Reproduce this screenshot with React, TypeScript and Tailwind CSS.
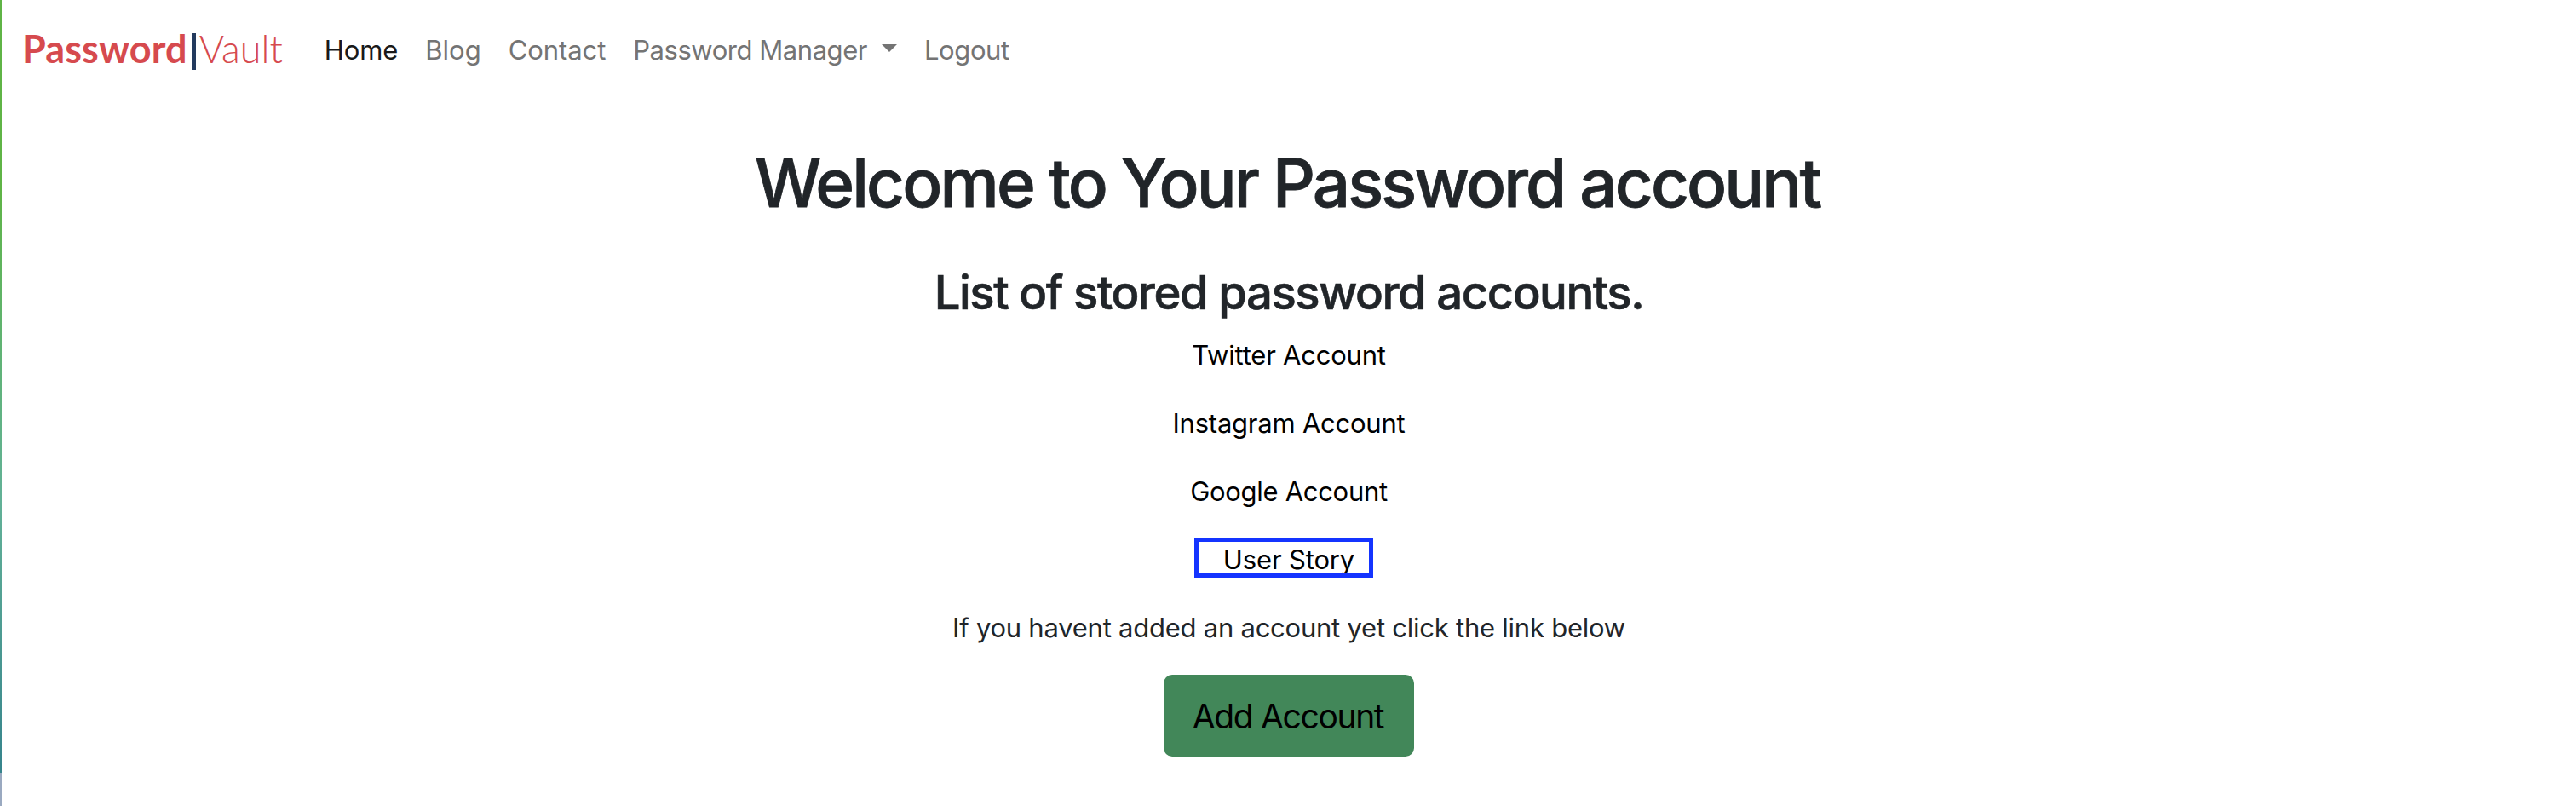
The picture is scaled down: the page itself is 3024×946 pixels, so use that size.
import React from "react";

const accounts = [
  { name: "Twitter Account", spacing: "tracking-[-0.22px]" },
  { name: "Instagram Account", spacing: "tracking-[-0.23px]" },
  { name: "Google Account", spacing: "tracking-[-0.3px]" },
];

function Logo() {
  return (
    <a className="flex h-[54px] items-start font-[Lato,sans-serif] text-[45px] leading-[54px] text-[#d64a4e]">
      <span className="font-bold tracking-[0.1px]">Password</span>
      <span className="ml-[5px] mt-[9px] h-[43px] w-[5px] bg-[#233a5e]" />
      <span className="ml-1 font-light">Vault</span>
    </a>
  );
}

function Navbar() {
  return (
    <nav className="flex h-[167px] items-start pl-6 pt-[30px]">
      <Logo />
      <div className="ml-[49px] flex items-center gap-8 pt-[5px] text-[31px] leading-[48px] text-[#747474]">
        <a className="tracking-[-0.1px] text-[#191919]">Home</a>
        <a>Blog</a>
        <a className="tracking-[-0.08px]">Contact</a>
        <a className="flex items-center tracking-[-0.46px]">
          Password Manager
          <span className="mb-[5px] ml-[17px] border-x-[9px] border-t-[9px] border-x-transparent border-t-[#747474]" />
        </a>
        <a className="tracking-[-0.4px]">Logout</a>
      </div>
    </nav>
  );
}

export default function App() {
  return (
    <div className="flex h-[946px] w-full overflow-hidden bg-white font-[Inter,sans-serif] text-[#212529]">
      <div className="flex w-[2px] shrink-0 flex-col">
        <div className="h-[907px] bg-linear-to-b from-[#5fb446] from-25% via-[#62b197] via-65% to-[#36848c]" />
        <div className="flex-1 bg-[#9aa9c0]" />
      </div>
      <div className="flex-1">
        <Navbar />
        <main className="flex flex-col items-center">
          <h1 className="pr-1 text-[78px] font-medium leading-[96px] tracking-[-2.87px] [-webkit-text-stroke:0.8px]">
            Welcome to Your Password account
          </h1>
          <h2 className="mt-[47px] text-[54.5px] font-medium leading-[67px] tracking-[-1.48px] [-webkit-text-stroke:0.6px]">
            List of stored password accounts.
          </h2>
          <div className="mt-4 flex flex-col items-center gap-8 text-[31px] leading-[48px] text-black">
            {accounts.map((account) => (
              <a key={account.name} className={account.spacing}>
                {account.name}
              </a>
            ))}
            <a className="relative tracking-[-0.15px]">
              User Story
              <span className="absolute -left-[34px] -top-[2px] h-[47px] w-[210px] border-[5px] border-[#1434ff]" />
            </a>
          </div>
          <p className="mt-8 text-[31px] leading-[48px] tracking-[-0.24px]">
            If you havent added an account yet click the link below
          </p>
          <button className="mt-[31px] h-24 w-[294px] rounded-[10px] bg-[#428759] pr-[2px] pt-[2px] text-[39px] leading-[60px] tracking-[-1.35px] text-black">
            Add Account
          </button>
        </main>
      </div>
    </div>
  );
}
